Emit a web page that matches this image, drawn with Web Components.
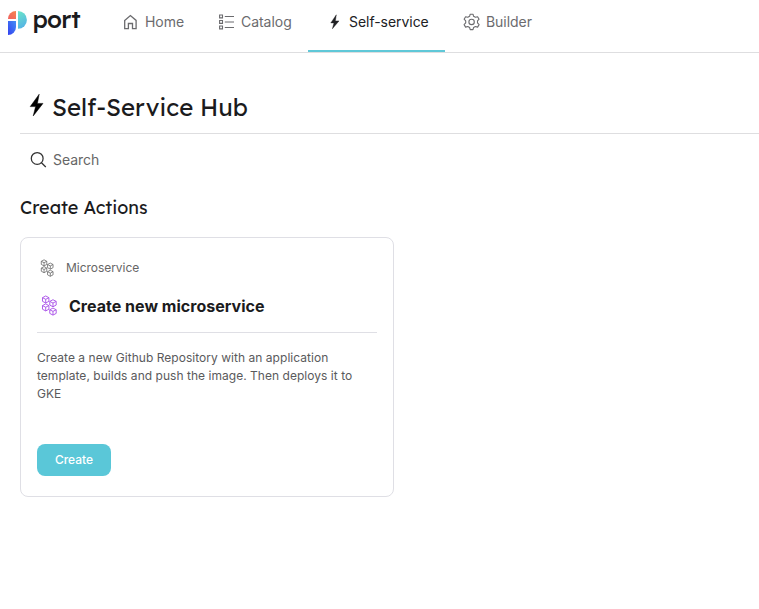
<!DOCTYPE html>
<html lang="en">
<head>
<meta charset="utf-8">
<title>Self-Service Hub</title>
<style>
html,body{margin:0;background:#fff}
body{font-family:Inter,"Liberation Sans",sans-serif;color:#1b1b1d;height:609px;overflow:hidden}
</style>
</head>
<body>
<port-app></port-app>
<script>
const define = (name, html) => {
  const t = document.createElement('template');
  t.innerHTML = html;
  customElements.define(name, class extends HTMLElement {
    constructor() {
      super();
      this.attachShadow({mode: 'open'}).append(t.content.cloneNode(true));
    }
  });
};

const cube = (x, y) => `<g transform="translate(${x} ${y})"><path d="M0-3.3 3-1.7V1.7L0 3.3-3 1.7V-1.7Z"/><path d="M-3-1.7 0-.2 3-1.7M0-.2V3.3"/></g>`;
const icons = {
  home: [20, 20, '<path d="M4.7 8.4 10.4 3.5 16.1 8.4V16.7H12.5V11.5H8.4V16.7H4.7Z" fill="none" stroke="currentColor" stroke-width="1.3"/>'],
  catalog: [20, 20, '<g fill="none" stroke="currentColor" stroke-width="1.1"><path d="M3.6 3h2.9v2.9H3.6zM3.6 8.5h2.9v2.9H3.6zM3.6 14h2.9v2.9H3.6z"/><path d="M8.8 4.5H18M8.8 10H18M8.8 15.5H18" stroke-width="1"/></g>'],
  bolt: [20, 20, '<path d="M12.3 2.8 6.8 10.9H9.9L8.4 16.8 15 8.9H11.4Z" fill="currentColor" stroke="currentColor" stroke-width=".4"/>'],
  gear: [20, 20, '<g fill="none" stroke="currentColor" stroke-width="1.1" stroke-linejoin="round"><path d="M9.2 2.2h2.8l.6 2.1 1.8 1 2.2-.6 1.5 2.5-1.6 1.7v2l1.6 1.7-1.5 2.5-2.2-.6-1.8 1-.6 2.1H9.2l-.6-2.1-1.8-1-2.2.6-1.5-2.5 1.6-1.7v-2L3.1 7.2l1.5-2.5 2.2.6 1.8-1Z"/><circle cx="10.6" cy="9.9" r="2.7"/></g>'],
  hub: [16, 24, '<path d="M11.2 .2 2.2 12.6H7.6L5.2 22 15 9.4H9.4Z" fill="currentColor" stroke="currentColor" stroke-width=".5"/>'],
  search: [18, 18, '<g fill="none" stroke="currentColor" stroke-width="1.25" stroke-linecap="round"><circle cx="7.2" cy="7.4" r="5.9"/><path d="M11.5 11.7 15.5 15.7"/></g>'],
  cubes: [16, 20, `<g fill="none" stroke="currentColor" stroke-width=".85" stroke-linejoin="round">${cube(4.4, 4.2)}${cube(11.2, 7.7)}${cube(4.4, 11.6)}${cube(11.2, 15.5)}</g>`]
};
customElements.define('ui-icon', class extends HTMLElement {
  connectedCallback() {
    if (this.shadowRoot) return;
    const [w, h, body] = icons[this.getAttribute('name')];
    const s = +(this.getAttribute('scale') || 1);
    this.attachShadow({mode: 'open'}).innerHTML =
      `<style>:host{display:block;flex:none}svg{display:block}</style><svg width="${w*s}" height="${h*s}" viewBox="0 0 ${w} ${h}">${body}</svg>`;
  }
});

define('port-logo', `<style>
:host{display:flex;width:104px;height:44px;flex:none;color:#1b1b1d}
svg{margin:10px 0 0 7px;flex:none}
span{font:500 24px/36px Lexend,Inter,sans-serif;letter-spacing:-.7px;margin:1px 0 0 4.4px}
</style>
<svg width="21" height="26" viewBox="0 0 21 26">
<defs>
<linearGradient id="a" x1="0" y1="1" x2="1" y2="0"><stop offset="0" stop-color="#f0605f"/><stop offset="1" stop-color="#f5864f"/></linearGradient>
<linearGradient id="b" x1="0" y1="0" x2=".3" y2="1"><stop offset="0" stop-color="#6be6c8"/><stop offset="1" stop-color="#55b4e4"/></linearGradient>
<linearGradient id="c" x1="1" y1="0" x2="0" y2="1"><stop offset="0" stop-color="#448ff5"/><stop offset="1" stop-color="#3440f0"/></linearGradient>
</defs>
<path d="M1 9A8 8 0 0 1 9 1V9Z" fill="url(#a)"/>
<path d="M11 1A8.9 8.9 0 0 1 11 18.8Z" fill="url(#b)"/>
<path d="M1 11H9V17A8 8 0 0 1 1 25Z" fill="url(#c)"/>
</svg><span>port</span>`);

define('nav-tab', `<style>
:host{display:flex;box-sizing:border-box;height:52px;padding:0 16px;gap:5px;color:#6b6b6e;border-bottom:2px solid transparent;font-size:14px;line-height:20px;letter-spacing:-.04px;width:var(--w)}
:host([active]){color:#202124;border-color:#5fc8d8}
div{margin-top:12px;white-space:nowrap}
::slotted(ui-icon){margin-top:12px}
</style><slot name="icon"></slot><div><slot></slot></div>`);

define('top-bar', `<style>:host{display:flex;height:52px;border-bottom:1px solid #dedee0}</style><slot></slot>`);

define('page-title', `<style>
:host{display:flex;box-sizing:border-box;height:81px;border-bottom:1px solid #dedee0;padding:41px 0 0 8px;gap:8px}
h1{margin:-3px 0 0;font:400 24px/32px Lexend,Inter,sans-serif;white-space:nowrap}
ui-icon{color:#000}
</style><ui-icon name="hub"></ui-icon><h1><slot></slot></h1>`);

define('search-field', `<style>
:host{display:flex;box-sizing:border-box;padding:17px 0 0 10px;gap:5px;height:40px;font-size:14px;line-height:18px;color:#666;letter-spacing:-.04px}
ui-icon{color:#333}
</style><ui-icon name="search"></ui-icon><slot></slot>`);

define('action-button', `<style>
:host{display:block}
button{display:block;border:0;border-radius:8px;background:#5ac7d8;color:#fff;width:74px;height:32px;padding:0;font:500 12px/32px Inter,sans-serif}
</style><button><slot></slot></button>`);

define('action-card', `<style>
:host{display:block;box-sizing:border-box;width:374px;height:260px;border:1px solid #dfdfe5;border-radius:8px;padding:20px 16px 0}
.kind{display:flex;height:20px;padding-left:3px;gap:11.3px;font-size:12px;line-height:20px;color:#666;letter-spacing:-.04px}
.kind ui-icon{margin-top:1px}
.name{display:flex;height:24px;margin-top:16px;padding-left:3.5px;gap:11.4px}
.name ui-icon{color:#a84ee8;margin-top:1px}
h3{margin:0;font:700 16px/24px Inter,sans-serif;letter-spacing:.02px;white-space:nowrap}
.rule{height:1px;background:#dfdfe5;margin-top:14px}
p{margin:16px 0 0;height:95px;font-size:12px;line-height:18px;color:#5a5a5c;letter-spacing:.035px}
</style>
<div class="kind"><ui-icon name="cubes" scale=".92"></ui-icon><slot name="kind"></slot></div>
<div class="name"><ui-icon name="cubes" scale="1.07"></ui-icon><h3><slot name="title"></slot></h3></div>
<div class="rule"></div>
<p><slot></slot></p>
<slot name="action"></slot>`);

define('port-app', `<style>
:host{display:block}
main{padding-left:20px}
h2{margin:22px 0 17px;font:400 18px/24px Lexend,Inter,sans-serif;white-space:nowrap;height:24px}
nav{display:flex}
</style>
<top-bar>
<port-logo></port-logo>
<nav>
<nav-tab style="--w:96px"><ui-icon slot="icon" name="home"></ui-icon>Home</nav-tab>
<nav-tab style="--w:108px"><ui-icon slot="icon" name="catalog"></ui-icon>Catalog</nav-tab>
<nav-tab style="--w:137px" active><ui-icon slot="icon" name="bolt"></ui-icon>Self-service</nav-tab>
<nav-tab><ui-icon slot="icon" name="gear"></ui-icon>Builder</nav-tab>
</nav>
</top-bar>
<main>
<page-title>Self-Service Hub</page-title>
<search-field>Search</search-field>
<h2>Create Actions</h2>
<action-card>
<span slot="kind">Microservice</span><span slot="title">Create new microservice</span>
Create a new Github Repository with an application template, builds and push the image. Then deploys it to GKE
<action-button slot="action">Create</action-button>
</action-card>
</main>`);
</script>
</body>
</html>
